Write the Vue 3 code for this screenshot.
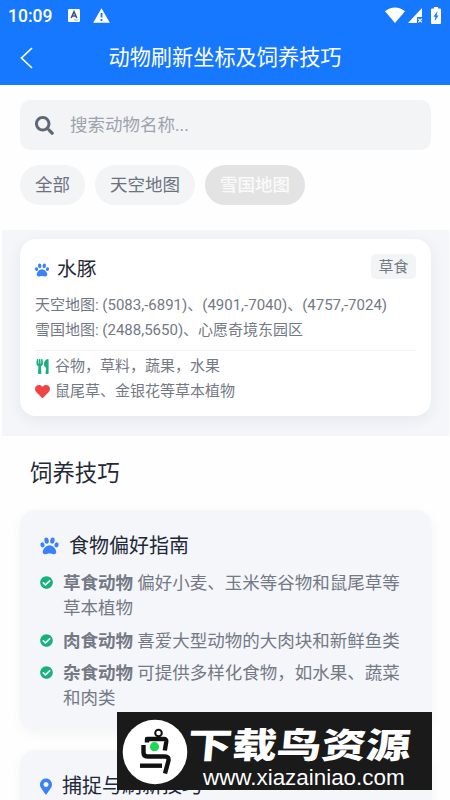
<script setup>
import { ref } from 'vue'

const keyword = ref('')
const filters = [
  { label: '全部' },
  { label: '天空地图' },
  { label: '雪国地图', active: true },
]
const tips = [
  { name: '草食动物', text: '偏好小麦、玉米等谷物和鼠尾草等草本植物' },
  { name: '肉食动物', text: '喜爱大型动物的大肉块和新鲜鱼类' },
  { name: '杂食动物', text: '可提供多样化食物，如水果、蔬菜和肉类' },
]
const paw = 'M256 232c-90 0-192 108-192 192 0 44 30 68 75 68 42 0 76-20 117-20s75 20 117 20c45 0 75-24 75-68C448 340 346 232 256 232z'
const toes = [
  { x: 56, y: 224, rx: 58, ry: 72, r: -18 },
  { x: 173, y: 104, rx: 62, ry: 88, r: -10 },
  { x: 339, y: 104, rx: 62, ry: 88, r: 10 },
  { x: 456, y: 224, rx: 58, ry: 72, r: 18 },
]
</script>

<template>
  <div class="page">
    <header class="top">
      <div class="status">
        <span class="time">10:09</span>
        <svg class="st-a" viewBox="0 0 12 13"><rect width="12" height="13" rx="1.2" fill="#fff" /><path d="M3.2 9 6 2.6 8.8 9M4.2 7h3.6" fill="none" stroke="#35557f" stroke-width="1.5" /><path d="M6 11h4" stroke="#8fb4e8" stroke-width="1" /></svg>
        <svg class="st-w" viewBox="0 0 17 15"><path d="M8.5 0.3 16.8 14.7H.2z" fill="#fff" /><path d="M8.5 5v4.6M8.5 11v2" stroke="#1677ff" stroke-width="1.8" /></svg>
        <span class="spacer"></span>
        <svg class="st-wifi" viewBox="0 0 20 16"><path d="M0 4.2C5.5-.9 14.5-.9 20 4.2L10 16z" fill="#fff" /></svg>
        <svg class="st-sig" viewBox="0 0 15 15"><path d="M14 0v9H9v6H0z" fill="#fff" /><path d="m10.3 10.6 3.6 3.8m0-3.8-3.6 3.8" stroke="#fff" stroke-width="1.2" /></svg>
        <svg class="st-bat" viewBox="0 0 10 17"><path d="M3 0h4v1.6h2q1 0 1 1V16q0 1-1 1H1q-1 0-1-1V2.600q0-1 1-1h2z" fill="#fff" /><path d="M6.500 4 2.500 9.800h2L3.600 14l4-5.600h-2z" fill="#1677ff" /></svg>
      </div>
      <div class="nav">
        <svg class="back" viewBox="0 0 13 22"><path d="M12 1 1.500 11 12 21" fill="none" stroke="#fff" stroke-width="1.700" /></svg>
        <h1>动物刷新坐标及饲养技巧</h1>
      </div>
    </header>

    <section class="finder">
      <label class="search">
        <svg viewBox="0 0 512 512"><path fill="#5f6876" d="M505 442.700L405.300 343c-4.500-4.500-10.600-7-17-7H372c27.600-35.300 44-79.700 44-128C416 93.100 322.900 0 208 0S0 93.100 0 208s93.100 208 208 208c48.300 0 92.700-16.400 128-44v16.300c0 6.400 2.500 12.500 7 17l99.700 99.700c9.400 9.400 24.600 9.400 33.900 0l28.300-28.300c9.400-9.400 9.400-24.600.1-34zM208 336c-70.700 0-128-57.200-128-128 0-70.700 57.200-128 128-128 70.700 0 128 57.200 128 128 0 70.700-57.200 128-128 128z" /></svg>
        <input v-model="keyword" placeholder="搜索动物名称..." />
      </label>
      <div class="pills">
        <button v-for="f in filters" :key="f.label" :class="{ active: f.active }">{{ f.label }}</button>
      </div>
    </section>

    <section class="animals">
      <article class="animal">
        <div class="head">
          <svg class="paw-s" viewBox="0 0 512 512" fill="#3b82f6"><path :d="paw" /><ellipse v-for="t in toes" :key="t.x" :cx="t.x" :cy="t.y" :rx="t.rx" :ry="t.ry" :transform="`rotate(${t.r} ${t.x} ${t.y})`" /></svg>
          <h2>水豚</h2>
          <span class="tag">草食</span>
        </div>
        <p>天空地图: (5083,-6891)、(4901,-7040)、(4757,-7024)</p>
        <p>雪国地图: (2488,5650)、心愿奇境东园区</p>
        <div class="food">
          <p class="row">
            <svg class="fork" viewBox="0 0 416 512"><path fill="#18b17c" d="M207.900 15.200c.8 4.700 16.100 94.500 16.100 128.800 0 52.300-27.800 89.600-68.900 104.600L168 486.700c.7 13.700-10.200 25.300-24 25.300H80c-13.700 0-24.700-11.500-24-25.300l12.900-238.100C27.700 233.600 0 196.200 0 144 0 109.600 15.300 19.900 16.100 15.200 19.300-5.100 61.400-5.400 64 16.300v141.200c1.300 3.400 15.100 3.200 16 0 1.400-25.300 7.900-139.200 8-141.800 3.300-20.800 44.700-20.800 47.900 0 .2 2.700 6.600 116.500 8 141.800.9 3.200 14.800 3.400 16 0V16.300c2.600-21.600 44.800-21.400 48-1.100zm119.200 285.700l-15 185.100c-1.200 14 9.900 26 23.900 26h56c13.300 0 24-10.700 24-24V24c0-13.200-10.700-24-24-24-82.500 0-221.400 178.500-64.900 300.900z" /></svg>
            <span>谷物，草料，蔬果，水果</span>
          </p>
          <p class="row">
            <svg class="heart" viewBox="0 0 512 512"><path fill="#ef4444" d="M462.300 62.600C407.500 15.900 326 24.300 275.700 76.200L256 96.500l-19.700-20.300C186.100 24.300 104.500 15.900 49.700 62.600c-62.800 53.600-66.100 149.800-9.900 207.900l193.500 199.800c12.500 12.900 32.800 12.900 45.300 0l193.500-199.800c56.300-58.100 53-154.300-9.800-207.900z" /></svg>
            <span>鼠尾草、金银花等草本植物</span>
          </p>
        </div>
      </article>
    </section>

    <section class="skills">
      <h2 class="section-title">饲养技巧</h2>
      <article class="guide">
        <h3><svg class="paw-l" viewBox="0 0 512 512" fill="#3b82f6"><path :d="paw" /><ellipse v-for="t in toes" :key="t.x" :cx="t.x" :cy="t.y" :rx="t.rx" :ry="t.ry" :transform="`rotate(${t.r} ${t.x} ${t.y})`" /></svg>食物偏好指南</h3>
        <ul>
          <li v-for="t in tips" :key="t.name">
            <svg viewBox="0 0 512 512"><path fill="#18b17c" d="M504 256c0 136.967-111.033 248-248 248S8 392.967 8 256 119.033 8 256 8s248 111.033 248 248zM227.314 387.314l184-184c6.248-6.248 6.248-16.379 0-22.627l-22.627-22.627c-6.248-6.249-16.379-6.249-22.628 0L216 308.118l-70.059-70.059c-6.248-6.248-16.379-6.248-22.628 0l-22.627 22.627c-6.248 6.248-6.248 16.379 0 22.627l104 104c6.249 6.249 16.379 6.249 22.628.001z" /></svg>
            <p><strong>{{ t.name }}</strong> {{ t.text }}</p>
          </li>
        </ul>
      </article>
      <article class="guide capture">
        <h3><svg class="pin" viewBox="0 0 384 512"><path fill="#3b82f6" d="M172.268 501.670C26.970 291.031 0 269.413 0 192 0 85.961 85.961 0 192 0s192 85.961 192 192c0 77.413-26.970 99.031-172.268 309.670-9.535 13.774-29.930 13.773-39.464 0zM192 272c44.183 0 80-35.817 80-80s-35.817-80-80-80-80 35.817-80 80 35.817 80 80 80z" /></svg>捕捉与刷新技巧</h3>
      </article>
    </section>

    <aside class="banner">
      <svg class="bird" viewBox="0 0 66 66">
        <circle cx="33" cy="33" r="32.300" fill="#fff" />
        <g fill="none" stroke="#111" stroke-width="4.400" stroke-linejoin="round">
          <circle cx="36.500" cy="14" r="3.300" stroke-width="2" />
          <path d="M25 23.500v-3.500h17q2.500 0 2.300 2.500l-1.500 9" />
          <path d="M21.500 26v7.500q0 4 4 4h17.500q4 0 3.500 4l-3.500 13" />
          <path d="M18 46.700h22" />
        </g>
        <circle cx="32.500" cy="27.700" r="4.600" fill="#1fd655" />
      </svg>
      <div class="brand">
        <div class="brand-name">下载鸟资源</div>
        <div class="brand-url">www.xiazainiao.com</div>
      </div>
    </aside>
  </div>
</template>

<style>
body { margin: 0; background: #fff; overflow: hidden; }
</style>

<style scoped>
* { box-sizing: border-box; }
h1, h2, h3, p, ul { margin: 0; padding: 0; font-weight: 400; }
svg { display: block; flex: none; overflow: visible; }
.page { position: relative; width: 450px; height: 800px; overflow: hidden; background: #fefefe; font-family: Roboto, "Noto Sans CJK SC", sans-serif; color: #737985; }
.top { height: 85px; background: #1677ff; color: #fff; }
.status { display: flex; height: 30px; padding: 0 8px; align-items: center; }
.time { width: 60px; font-size: 17.500px; font-weight: 500; line-height: 30px; padding-top: 1px; }
.st-a { width: 12px; height: 13px; }
.st-w { width: 17px; height: 15px; margin-left: 13px; }
.spacer { flex: 1; }
.st-wifi { width: 20px; height: 16px; }
.st-sig { width: 15px; height: 15px; margin: 1px 0 0 3px; }
.st-bat { width: 10px; height: 17px; margin: 0 1px 0 8px; }
.nav { display: flex; align-items: center; height: 55px; padding-left: 20px; }
.back { width: 13px; height: 22px; margin-top: 1px; }
h1 { flex: 1; margin-right: 33px; padding-top: 1px; text-align: center; font-size: 21.200px; line-height: 54px; }
.finder { height: 145px; padding: 15px 19px 0 20px; }
.search { display: flex; align-items: center; height: 50px; padding: 0 15px; border-radius: 10px; background: #f3f4f6; }
.search svg { width: 19px; height: 19px; }
input { flex: 1; min-width: 0; margin-left: 16px; padding: 0; border: 0; outline: 0; background: transparent; font: 17.500px/26px Roboto, "Noto Sans CJK SC", sans-serif; }
input::placeholder { color: #9ca3af; opacity: 1; }
.pills { display: flex; gap: 10px; margin-top: 15px; }
button { height: 40px; padding: 0 15px; border: 0; border-radius: 20px; background: #f3f4f6; color: #6b7280; font: 17.500px/38px Roboto, "Noto Sans CJK SC", sans-serif; }
button.active { background: #e3e3e3; color: #fafafa; font-weight: 500; }
.animals { height: 206px; margin: 0 1px 0 2px; padding: 9px 18px 0; background: #f4f6fa; }
.animal { height: 177px; padding: 16px 15px 0; border-radius: 16px; background: #fff; box-shadow: 0 4px 15px rgba(30, 40, 70, .07); }
.head { display: flex; align-items: center; height: 30px; margin-bottom: 8px; }
.paw-s { width: 14px; height: 14px; }
.head h2 { margin-left: 8px; font-size: 19.800px; line-height: 30px; color: #1f2937; }
.tag { width: 45px; height: 25px; margin: -7px 0 0 auto; border-radius: 5px; background: #f3f4f6; text-align: center; font-size: 15px; line-height: 26px; }
.animal p { font-size: 15px; line-height: 25px; white-space: nowrap; }
.food { margin-top: 7px; padding-top: 3px; border-top: 1px solid #eff1f3; }
.row { display: flex; align-items: center; }
.row svg { margin-right: 5px; }
.fork { width: 13px; height: 15px; margin-left: 1px; }
.row .fork { margin-right: 6px; }
.heart { width: 15px; height: 15px; }
.skills { padding: 0 18px 0 20px; }
.section-title { padding: 19px 0 0 10px; height: 74px; font-size: 22.400px; line-height: 36px; color: #1f2937; }
.guide { height: 221px; padding: 19px 20px 0; border-radius: 16px; background: #f4f6fa; box-shadow: 0 3px 12px rgba(0, 0, 0, .045); }
.guide h3 { display: flex; align-items: center; height: 34px; font-size: 20px; line-height: 34px; color: #1f2937; }
.paw-l { width: 19px; height: 18px; margin-right: 10px; }
.pin { width: 12px; height: 17px; margin-right: 10px; }
ul { list-style: none; padding-top: 8px; }
li { display: flex; margin-bottom: 7.500px; }
li svg { width: 13px; height: 13px; margin: 5px 10px 0 0; }
li p { font-size: 17.500px; line-height: 25px; }
strong { font-weight: 700; }
.capture { margin-top: 19px; }
.banner { position: absolute; left: 117px; top: 712px; display: flex; width: 315px; height: 78px; padding: 7px 0 0 5px; background: #1a1a1a; color: #fff; overflow: hidden; }
.bird { width: 66px; height: 66px; }
.brand { width: 230px; }
.brand-name { height: 46px; white-space: nowrap; font: 900 35px/47px "Noto Sans CJK SC", sans-serif; transform: scaleX(1.275) skewX(-4deg); transform-origin: left center; }
.brand-url { margin: 1px 0 0 15px; font: 22.400px/24px "Liberation Sans", sans-serif; }
</style>
